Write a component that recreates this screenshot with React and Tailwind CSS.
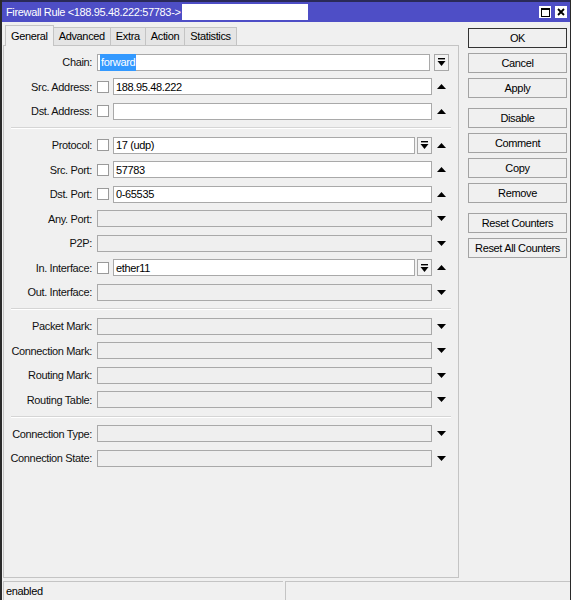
import React from 'react';

const FONT = { fontFamily: '"Liberation Sans", Arial, sans-serif' };

const UpArrow = () => (
  <svg width="9" height="5" viewBox="0 0 9 5"><path d="M0 5 L4.5 0 L9 5 Z" fill="#000" /></svg>
);
const DownArrow = () => (
  <svg width="9" height="5" viewBox="0 0 9 5"><path d="M0 0 L9 0 L4.5 5 Z" fill="#000" /></svg>
);
const DropBtn = () => (
  <div className="w-[15px] h-[17px] border border-[#a8a8a8] bg-[#f3f3f3] flex items-center justify-center">
    <svg width="9" height="8" viewBox="0 0 9 8">
      <rect x="1" y="0" width="7" height="1.4" fill="#000" />
      <path d="M0.5 3 L8.5 3 L4.5 8 Z" fill="#000" />
    </svg>
  </div>
);
const Check = () => <div className="w-[12px] h-[12px] border border-[#9a9a9a] bg-white shrink-0 mr-[4px]" />;

const Input = ({ value, disabled }) => (
  <div
    className={`flex-1 h-[17px] border border-[#a9a9a9] flex items-center pl-[2px] text-[11px] text-black ${
      disabled ? 'bg-[#efefef]' : 'bg-white'
    }`}
  >
    {value}
  </div>
);

const Row = ({ label, children, arrow }) => (
  <div className="h-[24.5px] flex items-center">
    <div className="w-[88px] text-right text-[11px] text-[#111] whitespace-nowrap">{label}:</div>
    <div className="w-[335px] ml-[5px] flex items-center">{children}</div>
    <div className="w-[18px] flex items-center justify-center">{arrow}</div>
  </div>
);

const Sep = () => (
  <div className="h-[9.5px] flex items-center px-[7px]">
    <div className="w-full border-t border-[#d5d5d5] border-b border-b-white" />
  </div>
);

const Btn = ({ children, def, mt }) => (
  <div
    className={`h-[20px] w-[99px] flex items-center justify-center text-[11px] text-black bg-[#f0f0f0] ${
      def ? 'border border-[#333]' : 'border border-[#a3a3a3]'
    } ${mt || ''}`}
  >
    {children}
  </div>
);

export default function App() {
  return (
    <div
      className="w-[571px] h-[600px] bg-[#f0f0f0] border-l-2 border-r border-[#2a2a2a] flex flex-col overflow-hidden tracking-[-0.35px]"
      style={FONT}
    >
      {/* title bar */}
      <div className="h-[22px] shrink-0 bg-[#4e4ec6] border-t-2 border-[#2a2a58] flex items-center pl-[4px] pr-[2px]">
        <span className="text-white text-[11px] whitespace-nowrap">Firewall Rule &lt;188.95.48.222:57783-&gt;</span>
        <div className="w-[126px] h-[16px] bg-white ml-[1px]" />
        <div className="flex-1" />
        <div className="w-[12px] h-[12px] bg-white flex items-center justify-center mr-[4px]">
          <div className="w-[9px] h-[9px] border border-black border-t-2" />
        </div>
        <div className="w-[12px] h-[12px] bg-white flex items-center justify-center mr-[1px]">
          <svg width="8" height="8" viewBox="0 0 8 8">
            <path d="M1 1 L7 7 M7 1 L1 7" stroke="#000" strokeWidth="1.8" />
          </svg>
        </div>
      </div>

      <div className="flex flex-1 min-h-0">
        {/* left: tabs + panel */}
        <div className="w-[456px] ml-[1px] flex flex-col pb-[2px]">
          <div className="h-[23px] flex items-end pl-[2px] shrink-0">
            <div className="h-[21px] px-[5px] bg-[#f0f0f0] border border-b-0 border-[#c4c4c4] flex items-center text-[11px] text-black relative top-[1px]">
              General
            </div>
            {['Advanced', 'Extra', 'Action', 'Statistics'].map((t) => (
              <div
                key={t}
                className="h-[18px] px-[5px] bg-[#e5e5e5] border border-b-0 border-l-0 border-[#c4c4c4] flex items-center text-[11px] text-black"
              >
                {t}
              </div>
            ))}
          </div>
          <div className="flex-1 border border-[#c4c4c4] pt-[4px]">
            <Row label="Chain" arrow={<DropBtn />}>
              <div className="flex-1 h-[17px] border border-[#a9a9a9] bg-white flex items-center pl-[2px] text-[11px] mr-[2px]">
                <span className="bg-[#3399ff] text-white px-[1px]">forward</span>
              </div>
            </Row>
            <Row label="Src. Address" arrow={<UpArrow />}>
              <Check />
              <Input value="188.95.48.222" />
            </Row>
            <Row label="Dst. Address" arrow={<UpArrow />}>
              <Check />
              <Input value="" />
            </Row>
            <Sep />
            <Row label="Protocol" arrow={<UpArrow />}>
              <Check />
              <Input value="17 (udp)" />
              <div className="ml-[2px]">
                <DropBtn />
              </div>
            </Row>
            <Row label="Src. Port" arrow={<UpArrow />}>
              <Check />
              <Input value="57783" />
            </Row>
            <Row label="Dst. Port" arrow={<UpArrow />}>
              <Check />
              <Input value="0-65535" />
            </Row>
            <Row label="Any. Port" arrow={<DownArrow />}>
              <Input disabled />
            </Row>
            <Row label="P2P" arrow={<DownArrow />}>
              <Input disabled />
            </Row>
            <Row label="In. Interface" arrow={<UpArrow />}>
              <Check />
              <Input value="ether11" />
              <div className="ml-[2px]">
                <DropBtn />
              </div>
            </Row>
            <Row label="Out. Interface" arrow={<DownArrow />}>
              <Input disabled />
            </Row>
            <Sep />
            <Row label="Packet Mark" arrow={<DownArrow />}>
              <Input disabled />
            </Row>
            <Row label="Connection Mark" arrow={<DownArrow />}>
              <Input disabled />
            </Row>
            <Row label="Routing Mark" arrow={<DownArrow />}>
              <Input disabled />
            </Row>
            <Row label="Routing Table" arrow={<DownArrow />}>
              <Input disabled />
            </Row>
            <Sep />
            <Row label="Connection Type" arrow={<DownArrow />}>
              <Input disabled />
            </Row>
            <Row label="Connection State" arrow={<DownArrow />}>
              <Input disabled />
            </Row>
          </div>
        </div>

        {/* right: buttons */}
        <div className="ml-[9px] pt-[6px] flex flex-col gap-[5px]">
          <Btn def>OK</Btn>
          <Btn>Cancel</Btn>
          <Btn>Apply</Btn>
          <Btn mt="mt-[5px]">Disable</Btn>
          <Btn>Comment</Btn>
          <Btn>Copy</Btn>
          <Btn>Remove</Btn>
          <Btn mt="mt-[5px]">Reset Counters</Btn>
          <Btn>Reset All Counters</Btn>
        </div>
      </div>

      {/* status bar */}
      <div className="h-[20px] shrink-0 flex pl-[1px] pt-[1px] gap-[2px]">
        <div className="w-[280px] border-t border-l border-[#c4c4c4] flex items-center pl-[2px] text-[11px] text-black">
          enabled
        </div>
        <div className="flex-1 border-t border-l border-[#c4c4c4]" />
      </div>
    </div>
  );
}
